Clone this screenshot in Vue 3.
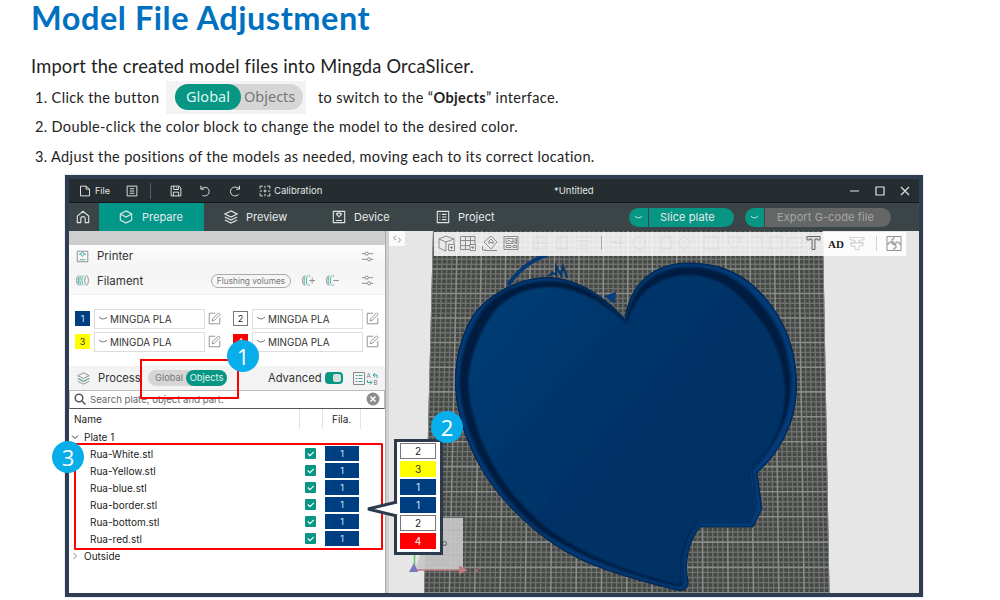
<script setup>
const icons = {
  file: 'M2 1.500h7.500l4.500 4v9H2zM9.500 1.500v4H14',
  list: 'M1.500 1.500h13v13h-13zM5 5h6M5 8h6M5 11h6',
  save: 'M1.500 1.500h10.500l2.500 2.500v10.500h-13zM5 1.500v4.500h6.500V1.500M4.500 14.500V9.500h7v5M9 3v1.500',
  undo: 'M2.500 1v4.500h4.500M3 5.500C6 1.500 13.500 2.500 13.500 8.500c0 5.500-5.500 7-9 5.500',
  redo: 'M14 1v4.500H9.500M13.500 5C10 1 2 2.500 2 8.500s6.500 8 11 4',
  calib: 'M5 1.500H1.500V5M8 1v3M11 1.500h3.500V5M1.500 11v3.500H5M14.500 11v3.500H11M1 8h3M12 8h3M8 12v3M6 8h4M8 6v4',
  home: 'M1.500 7 8 1.500 14.500 7v7.500H10.500V10a2.500 2.500 0 0 0-5 0v4.500h-4z',
  cube: 'M8 1 14.500 4.500v7L8 15l-6.500-3.500v-7zM1.500 4.500 8 8l6.500-3.500',
  layers: 'M8 1 15 4.500 8 8 1 4.500zM1 8l7 3.500L15 8M1 11.500 8 15l7-3.500',
  device: 'M1.500 1.500h13v13h-13zM4.500 12h7M4.500 4.500h1.500M10 4.500h1.500M8 8.500V7M6.500 3.500h3l.8 2L8 7.500 5.700 5.500z',
  project: 'M1.500 1.500h13v13h-13zM4 5h1M7 5h5M4 8h1M7 8h5M4 11h1M7 11h5',
  sliders: 'M1 4.500h4M9 4.500h6M1 11.500h7M12 11.500h3M5 4.500a2 2 0 1 0 4 0 2 2 0 1 0-4 0M8 11.500a2 2 0 1 0 4 0 2 2 0 1 0-4 0',
  edit: 'M9 1.500H1.500v13h13V7M5 11l1-3 7-7 2 2-7 7z',
}
const tabs = [
  { name: 'Prepare', icon: 'cube', cls: 't-prepare' },
  { name: 'Preview', icon: 'layers', cls: 't-preview' },
  { name: 'Device', icon: 'device', cls: 't-device' },
  { name: 'Project', icon: 'project', cls: 't-project' },
]
const filaments = [
  { n: 1, c: 'navy' }, { n: 2, c: 'white' }, { n: 3, c: 'yellow' }, { n: 4, c: 'red' },
]
const parts = ['White', 'Yellow', 'blue', 'border', 'bottom', 'red']
const choices = [
  { n: 2, c: 'white' }, { n: 3, c: 'yellow' }, { n: 1, c: 'navy' },
  { n: 1, c: 'navy' }, { n: 2, c: 'white' }, { n: 4, c: 'red' },
]
const rowY = (k) => 244.7 + 24.3 * k + 0.04 * k * k
let minor = ''
let major = ''
for (let i = 0; i <= 80; i++) {
  const line = `M${433 + (390 * i) / 80} 231L${424 + (405.5 * i) / 80} 593`
  if (i % 5) minor += line
  else major += line
}
for (let j = -2; j <= 72; j++) {
  const y = rowY(j / 5).toFixed(1)
  if (j % 5) minor += `M420 ${y}H832`
  else major += `M420 ${y}H832`
}
const heart = 'M625 319C607 299 580 279 550 277.500C522 277 496 290 477 310C462 330 455 358 455.500 383C456 408 463 436 481 468C503 506 540 538 572 555C590 565 620 576 676 590C684 592 689 588 688 581C685 566 686 545 700 527H753L762 509L757 473C782 450 797 420 796.500 384C796 348 784 317 760 292C740 271 716 263 688 263C655 263 630 282 625 319Z'
const wall = 'M626 321C630 294 650 267 688 267C714 267 736 276 755 297C780 324 790 352 791 384C791 416 777 444 752 469L756 507L749 522H699C686 538 680 560 683 583C681 588 675 586 668 584C616 571 570 553 536 527C492 490 462 434 459.500 383C460 358 466 335 481 313C495 291 525 281 550 281C580 281 603 298 626 321Z'
const floor = 'M627 324C633 302 649 276 688 275C712 275 732 286 747 304C772 330 782 354 785 386C787 418 775 445 751 469L755 506L748 521H698C684 536 679 560 681 581C679 586 675 584 668 582C618 569 572 549 541 523C500 488 471 434 468 383C469 358 480 330 496 309C512 293 530 287 552 287C582 289 605 304 627 324Z'
</script>

<template>
  <div class="page">
    <h1><span>Model File Adjustment</span></h1>
    <p class="lead">Import the created model files into Mingda OrcaSlicer.</p>
    <div class="step s1">
      <span class="s1a">1. Click the button</span>
      <span class="switchpic"><span class="bigswitch"><b>Global</b><i>Objects</i></span></span>
      <span class="s1b">to switch to the “<strong>Objects</strong>” interface.</span>
    </div>
    <div class="step s2">2. Double-click the color block to change the model to the desired color.</div>
    <div class="step s3">3. Adjust the positions of the models as needed, moving each to its correct location.</div>

    <div class="window">
      <div class="titlebar">
        <svg class="ic m-file" viewBox="0 0 16 16"><path :d="icons.file" /></svg>
        <span class="w-file">File</span>
        <svg class="ic" viewBox="0 0 16 16"><path :d="icons.list" /></svg>
        <span class="bar"></span>
        <svg class="ic m-save" viewBox="0 0 16 16"><path :d="icons.save" /></svg>
        <svg class="ic m-undo" viewBox="0 0 16 16"><path :d="icons.undo" /></svg>
        <svg class="ic m-redo" viewBox="0 0 16 16"><path :d="icons.redo" /></svg>
        <svg class="ic m-calib" viewBox="0 0 16 16"><path :d="icons.calib" /></svg>
        <span class="w-calib">Calibration</span>
        <span class="w-title">*Untitled</span>
        <svg class="winbtns" viewBox="0 0 62 12"><path d="M0 6h9M26 2h8v8h-8zM51 2l8 8M59 2l-8 8" /></svg>
      </div>

      <div class="tabbar">
        <div class="home"><svg class="ic big" viewBox="0 0 16 16"><path :d="icons.home" /></svg></div>
        <div v-for="t in tabs" :key="t.name" class="tab" :class="t.cls">
          <svg class="ic big" viewBox="0 0 16 16"><path :d="icons[t.icon]" /></svg>
          <span>{{ t.name }}</span>
        </div>
        <div class="actions">
          <span class="drop"><svg viewBox="0 0 10 5"><path d="M1 1q4 4 8 0" /></svg></span>
          <span class="act slice">Slice plate</span>
          <span class="drop d2"><svg viewBox="0 0 10 5"><path d="M1 1q4 4 8 0" /></svg></span>
          <span class="act export">Export G-code file</span>
        </div>
      </div>

      <div class="body">
        <div class="side">
          <div class="strip"></div>
          <div class="sec printer">
            <svg class="sic" viewBox="0 0 16 16"><path d="M1.500 1.500h13v13h-13z" /><path class="g" d="M4.500 12h7M3.500 5h3M9.500 5h3M6.500 3.500h3l.8 2L8 8 5.700 5.500z" /></svg>
            <span class="name">Printer</span>
            <svg class="sic sl" viewBox="0 0 16 16"><path :d="icons.sliders" /></svg>
          </div>
          <div class="sec fil">
            <svg class="sic" viewBox="0 0 16 16"><path d="M3 2C0 4 0 12 3 14M13 2c3 2 3 10 0 12M13 2c-3 2-3 10 0 12" /><path class="g" d="M5 2C2 4 2 12 5 14M7 2c-3 2-3 10 0 12M9.500 2c-3 2-3 10 0 12" /></svg>
            <span class="name">Filament</span>
            <span class="flush">Flushing volumes</span>
            <svg class="sic plus" viewBox="0 0 16 16"><path d="M3 2C0 4 0 12 3 14M8 1.500l2 1.500M8 14.500l2-1.500M9 8h7M12.500 4.500v7" /><path class="g" d="M4.500 2C2 4 2 12 4.500 14M7.500 2c-3 2-3 10 0 12" /></svg>
            <svg class="sic minus" viewBox="0 0 16 16"><path d="M3 2C0 4 0 12 3 14M8 1.500l2 1.500M8 14.500l2-1.500M9 8h7" /><path class="g" d="M4.500 2C2 4 2 12 4.500 14M7.500 2c-3 2-3 10 0 12" /></svg>
            <svg class="sic sl" viewBox="0 0 16 16"><path :d="icons.sliders" /></svg>
          </div>
          <div class="fils">
            <div v-for="f in filaments" :key="f.n" class="filrow">
              <span class="sw" :class="f.c">{{ f.n }}</span>
              <span class="combo"><svg viewBox="0 0 10 5"><path d="M1 1q4 4 8 0" /></svg>MINGDA PLA</span>
              <svg class="sic ed" viewBox="0 0 16 16"><path :d="icons.edit" /></svg>
            </div>
          </div>
          <div class="sec process">
            <svg class="sic" viewBox="0 0 16 16"><path :d="icons.layers" /><path class="g" d="M1 8l7 3.500L15 8" /></svg>
            <span class="name">Process</span>
            <span class="toggle"><i>Global</i><b>Objects</b></span>
            <span class="adv">Advanced</span>
            <span class="knob"><i></i></span>
            <svg class="cmp" viewBox="0 0 26 15"><path d="M.5 1.500h11v12H.500zM2.500 4.500h2M2.500 7.500h2M2.500 10.500h2" /><path class="g" d="M5.500 4.500h4M5.500 7.500h4M5.500 10.500h4M20 4h4v3M22 2l-2 2 2 2M14.500 9v2.500h4M17 9.500l2 2-2 2" /><text x="13.500" y="6.500">A</text><text x="20.500" y="14">B</text></svg>
          </div>
          <div class="search">
            <svg class="mag" viewBox="0 0 12 12"><circle cx="5" cy="5" r="3.800" /><path d="M8 8l3.500 3.500" /></svg>
            <span>Search plate, object and part.</span>
            <svg class="clr" viewBox="0 0 14 14"><circle cx="7" cy="7" r="6.500" /><path d="M4.500 4.500l5 5M9.500 4.500l-5 5" /></svg>
          </div>
          <div class="tree">
            <div class="thead"><span class="c1">Name</span><span class="c2"></span><span class="c3">Fila.</span><span class="c4"></span></div>
            <div class="node"><svg viewBox="0 0 8 8"><path d="M1 2.500l3 3 3-3" /></svg>Plate 1</div>
            <div v-for="p in parts" :key="p" class="part">
              <span class="pn">Rua-{{ p }}.stl</span>
              <svg class="chk" viewBox="0 0 10 10"><rect width="10" height="10" rx="1" /><path d="M2.500 5l2 2 3.500-3.500" /></svg>
              <span class="cell">1</span>
            </div>
            <div class="node out"><svg viewBox="0 0 8 8"><path d="M2.500 1l3 3-3 3" /></svg>Outside</div>
          </div>
        </div>

        <svg class="view" viewBox="386 231 533 362">
          <defs>
            <clipPath id="plate"><path d="M433 231H823L829.500 593H424Z" /></clipPath>
            <clipPath id="inside"><path :d="heart" /></clipPath>
            <linearGradient id="face" x1="0" y1="0" x2=".6" y2=".5"><stop offset="0" stop-color="#073d76" /><stop offset="1" stop-color="#003266" /></linearGradient>
            <filter id="soft"><feGaussianBlur stdDeviation="0.800" /></filter>
          </defs>
          <rect x="386" y="231" width="533" height="362" fill="#e6e6e6" />
          <rect x="386" y="231" width="3" height="362" fill="#cfcfcf" />
          <g clip-path="url(#plate)">
            <rect x="420" y="231" width="415" height="362" fill="#454845" />
            <path :d="minor" stroke="#6f726f" stroke-width="1.400" />
            <path :d="major" stroke="#8a8d8a" stroke-width="1.600" />
          </g>
          <path d="M432 518h31v52h-48z" fill="#c8c8c8" opacity=".92" />
          <path d="M432 530h31M432 555h31" stroke="#b5b5b5" />
          <path d="M414.500 569v-16" stroke="#62c662" stroke-width="1.500" />
          <path d="M414 570h48" stroke="#b97b7f" stroke-width="1.500" />
          <path d="M459 565.500l9 4.500-9 4.500z" fill="#b97b7f" />
          <path d="M409 572l5-9 4 9z" fill="#7777bd" />
          <path d="M475 568l4 5M479 568l-4 5" stroke="#ad7478" />
          <circle cx="444.500" cy="543.500" r="2" fill="none" stroke="#555" />
          <path d="M508 285C516 273 530 260 547 255" fill="none" stroke="#053a75" stroke-width="4" />
          <path d="M548 276l5-3 3 2 0-9 5 9 2-9 4 12" fill="none" stroke="#04376f" stroke-width="2" />
          <path d="M604 296l12-4-1 12z" fill="#063f7e" />
          <path :d="heart" fill="#023b77" stroke="#02264e" stroke-width="1" />
          <g clip-path="url(#inside)">
            <path :d="wall" fill="#001e40" filter="url(#soft)" />
            <path :d="floor" fill="url(#face)" filter="url(#soft)" />
            <path d="M751 470L755 507L748 521H699C686 537 680 560 682 582" fill="none" stroke="#0c447f" stroke-width="1" opacity=".7" />
            <path :d="heart" fill="none" stroke="#022c59" stroke-width="2" />
          </g>
          <rect x="389" y="231" width="16" height="15" fill="#fafafa" />
          <path d="M396 235.500l-2.500 2.500 2.500 2M398.500 237.500l2 2.500-2 2.500" class="tool" />
          <rect x="434" y="232" width="472" height="24" fill="#fff" opacity=".86" />
          <g class="tool">
            <path d="M439 239l7-3 8 3v5M439 239v9l7 3v-9l8-3M439 239l7 3M448.500 244.500h6v6h-6zM450 247.500h3M451.500 246v3" />
            <path d="M461 236.500h14v8M460.500 236.500v13h9M461 240.500h14M461 245.500h9M465.500 236v14M470.500 236v9M470 244.500h5.500v6H470zM471 247.500h3M472.800 246v3" />
            <path d="M484 242l7-6 6 6-6 7zM489 244v-3l2-2 2 2v3M489 242.500h4M485 250.500h12M482.500 246v4h4" />
            <path d="M504 236.500h14v13h-14zM506 238.500h7v5h-7zM515 238.500h1.500v5H515zM506 245.500h5v2h-5zM513 245.500h3.500v2H513zM507 242l2-2 2 2 2-1" />
          </g>
          <g class="ghost"><path d="M534 237h12v12h-12zM538 237v12M534 243h12M556 237h11v12h-11zM560 237v12M577 237h12M577 241h12M577 245h12M577 249h12M614 243h12M620 237v12M614 243l3-3M641 237a6 6 0 1 0 2 1M661 237h10v12h-10zM684 236l7 7-7 7-7-7zM704 237h14v12h-14zM728 237h12v6l-6 6-6-6zM750 237h12v12M770 237h12v12h-12zM788 238h14v10h-14z" /></g>
          <path d="M601.500 236v14" class="tool" opacity=".7" />
          <path d="M807 236.500h13v3.500h-2.500v-1h-2.500v10.500h-3V239h-2.500v1H807z" class="tool tee" />
          <text x="828" y="248" class="ad">AD</text>
          <path d="M850 237.500h14v2.500h-4v3h3v3h-4v3.500h-4V246h-4v-3h3v-3h-4zM850 243h14M855 240v3M859 240v3" class="tool pale" />
          <path d="M876.500 236v15" class="tool pale" />
          <path d="M887 236.500h14v14h-14zM894 236v3h-2v3h2v3h2v3h-2v2M887 244h2v-2h3v2h4v-2h3v2h2" class="tool" />
        </svg>
      </div>

      <div class="box box1"></div>
      <div class="box box3"></div>
      <div class="menu">
        <svg class="tail" viewBox="0 0 36 20"><path d="M34 3L5 10l29 7" /></svg>
        <span v-for="(c, i) in choices" :key="i" :class="c.c">{{ c.n }}</span>
      </div>
      <div class="badge b1">1</div>
      <div class="badge b2">2</div>
      <div class="badge b3">3</div>
    </div>
  </div>
</template>

<style>
html, body { background: #fff; overflow: hidden; }
</style>
<style scoped>
* { box-sizing: border-box; }
.page { width: 1000px; height: 600px; overflow: hidden; background: #fff; color: #222; font-family: Lato, "Open Sans", sans-serif; }
h1 { margin: 0; height: 46px; padding-left: 31px; font-size: 32.500px; line-height: 36px; letter-spacing: .54px; font-weight: 700; color: #0070c0; white-space: nowrap; }
.lead { margin: 0; height: 36px; padding-left: 31px; font-size: 18.300px; line-height: 40px; letter-spacing: .2px; white-space: nowrap; }
.step { display: flex; align-items: center; height: 30px; padding-left: 35px; font-size: 14.500px; letter-spacing: .35px; white-space: nowrap; }
.s2, .s3 { padding-bottom: 2px; }
.s1a { width: 131px; }
.s1b { margin-left: 12px; }
.switchpic { width: 140px; height: 33px; background: #f3f3f3; display: flex; align-items: center; padding-left: 9px; flex: none; letter-spacing: 0; }
.bigswitch { display: flex; width: 128px; height: 26px; border-radius: 13px; background: #d6d6d6; font-family: "Noto Sans", sans-serif; font-size: 14.500px; line-height: 25px; }
.bigswitch b { width: 66px; border-radius: 13px; background: #079684; color: #dff6f2; text-align: center; font-weight: 400; }
.bigswitch i { font-style: normal; color: #777; padding-left: 3px; }

.window { position: relative; margin: 3px 0 0 65px; width: 858px; height: 422px; border: 4px solid #2e3d51; display: flex; flex-direction: column; font-family: Inter, Roboto, sans-serif; box-shadow: 0 0 1px #8d99ad; }
svg { display: block; fill: none; flex: none; }
.ic { width: 12px; height: 12px; stroke: #dfe3e3; stroke-width: 1.300; }
.big { width: 14px; height: 14px; }
.titlebar { height: 24px; flex: none; background: #262d30; border-bottom: 1px solid #14191b; display: flex; align-items: center; color: #e2e5e5; font-size: 9.500px; white-space: nowrap; }
.m-file { margin-left: 10px; margin-right: 4px; }
.w-file { width: 31px; font-size: 9px; }
.bar { width: 1px; height: 16px; margin-left: 12px; background: #596063; }
.m-save { margin-left: 19px; }
.m-undo { margin-left: 17px; }
.m-redo { margin-left: 18px; }
.m-calib { margin-left: 18px; }
.w-calib { margin-left: 3px; width: 280px; }
.w-title { width: 296px; }
.winbtns { width: 62px; height: 12px; stroke: #dfe3e3; stroke-width: 1.200; }
.tabbar { height: 28px; flex: none; background: #3b4446; display: flex; color: #e8ebeb; font-size: 11px; }
.home { width: 30px; display: flex; align-items: center; padding-left: 7px; }
.tab { display: flex; align-items: center; gap: 8px; }
.t-prepare { width: 105px; padding-left: 20px; background: #009788; gap: 9px; }
.t-preview { width: 108px; padding-left: 20px; }
.t-device { width: 105px; padding-left: 20px; }
.t-project { width: 212px; padding-left: 19px; }
.actions { display: flex; align-items: center; }
.drop { width: 19px; height: 19px; border-radius: 10px 0 0 10px; background: #079684; display: flex; align-items: center; justify-content: center; margin-right: 1px; }
.drop svg { width: 9px; height: 5px; stroke: #d5eeea; }
.d2 { margin-left: 11px; }
.act { height: 19px; line-height: 18px; border-radius: 0 10px 10px 0; padding-left: 11px; font-size: 11px; white-space: nowrap; }
.slice { width: 85px; background: #079684; letter-spacing: .1px; }
.export { width: 126px; background: #656767; color: #a4a6a6; padding-left: 12px; letter-spacing: .1px; }
.body { flex: 1; display: flex; min-height: 0; }
.side { width: 317px; background: #fff; display: flex; flex-direction: column; color: #333; font-size: 11.500px; border-right: 1px solid #aaa; }
.strip { height: 14px; background: #cecece; flex: none; }
.sec { display: flex; align-items: center; background: #f5f5f5; flex: none; padding-left: 7px; }
.printer { height: 22px; background: linear-gradient(#fcfcfc, #f5f5f5); }
.fil { height: 28px; background: linear-gradient(#f3f3f3, #fafafa); border-bottom: 1px solid #efefef; }
.sic { width: 13px; height: 13px; stroke: #858585; stroke-width: 1.100; }
.g { stroke: #36a99d; }
.name { margin-left: 8px; }
.printer .name { width: 264px; }
.fil .name { width: 114px; }
.flush { width: 80px; height: 14px; border: 1px solid #aaa; border-radius: 7px; font-size: 8.300px; line-height: 12px; text-align: center; color: #777; white-space: nowrap; }
.plus { margin-left: 11px; }
.minus { margin-left: 11px; }
.fil .sl { margin-left: 22px; }
.fils { height: 71px; flex: none; display: grid; grid-template-columns: 158px 158px; grid-template-rows: 23px 23px; padding: 12px 0 0 6px; }
.filrow { display: flex; align-items: center; }
.sw { width: 15px; height: 15px; font-size: 9px; line-height: 15px; text-align: center; color: #222; }
.navy { background: #003e82; color: #dbe6f5; }
.yellow { background: #ff0; color: #333; }
.red { background: #f00; color: #fff; }
.white { background: #fff; box-shadow: inset 0 0 0 1px #777; }
.combo { margin-left: 4px; width: 111px; height: 20px; border: 1px solid #ddd; display: flex; align-items: center; gap: 2px; padding-left: 3px; font-size: 9.900px; color: #333; white-space: nowrap; }
.combo svg { width: 10px; height: 5px; stroke: #777; }
.ed { margin-left: 3px; stroke: #888; }
.process { height: 24px; background: #f3f3f3; padding-left: 8px; }
.process .name { width: 50px; font-size: 11.200px; }
.toggle { display: flex; width: 79px; height: 16px; border-radius: 8px; background: #d6d6d6; font-size: 9.300px; line-height: 16px; }
.toggle i { font-style: normal; color: #777; width: 38px; padding-left: 7px; }
.toggle b { width: 41px; font-weight: 400; color: #e2f6f3; background: #079684; border-radius: 8px; text-align: center; }
.adv { margin-left: 41px; width: 57px; font-size: 11.200px; }
.knob { width: 18px; height: 12px; border-radius: 4px; background: #079684; padding: 2px; display: flex; justify-content: flex-end; }
.knob i { width: 8px; height: 8px; border-radius: 2px; background: #d5dedc; }
.cmp { width: 26px; height: 15px; margin-left: 10px; stroke: #888; overflow: visible; }
.cmp text { font-size: 6px; fill: #777; stroke: none; }
.search { height: 19px; flex: none; border: 1px solid #bbb; border-bottom-color: #555; display: flex; align-items: center; padding: 0 0 1px 4px; color: #666; font-size: 9.600px; }
.search span { width: 276px; margin-left: 4px; }
.mag { width: 12px; height: 12px; stroke: #555; stroke-width: 1.500; }
.clr { width: 14px; height: 14px; margin-left: 0; stroke: #fff; stroke-width: 1.500; }
.clr circle { fill: #8d8d8d; stroke: none; }
.tree { font-size: 10px; color: #222; }
.thead { display: flex; height: 20px; line-height: 20px; }
.c1 { width: 231px; padding-left: 5px; border-right: 1px solid #e3e3e3; }
.c2 { width: 23px; border-right: 1px solid #e3e3e3; }
.c3 { width: 38px; padding-left: 9px; border-right: 1px solid #e3e3e3; }
.node { display: flex; align-items: center; height: 16px; gap: 5px; padding-left: 2px; }
.node svg { width: 8px; height: 8px; stroke: #333; }
.part { display: flex; align-items: center; height: 17px; padding-left: 21px; }
.pn { width: 215px; }
.chk { width: 11px; height: 11px; stroke: #fff; }
.chk rect { fill: #079684; stroke: none; }
.cell { margin-left: 9px; width: 34px; height: 15px; line-height: 15px; text-align: center; background: #003e82; color: #dce6f4; font-size: 9px; }
.out { height: 18px; }
.out svg { stroke: #888; }
.view { width: 533px; height: 100%; }
.tool { stroke: #777; stroke-width: .8; fill: none; }
.tee { stroke-width: 1; stroke: #666; fill: #ddd; }
.pale { stroke: #c7c7c7; }
.ghost { stroke: #bbb; opacity: .3; fill: none; }
.ad { font: 700 11px "Liberation Serif", serif; fill: #222; }
.box { position: absolute; border: 2px solid #f00; }
.box1 { left: 71px; top: 180px; width: 99px; height: 40px; }
.box3 { left: 5px; top: 264px; width: 309px; height: 107px; border-radius: 1px; }
.menu { position: absolute; left: 325px; top: 260px; width: 49px; height: 116px; background: #fff; border: 3px solid #2d3a4d; display: flex; flex-direction: column; gap: 2px; padding: 1px 3px; }
.menu span { width: 36px; height: 16px; flex: none; line-height: 16px; text-align: center; font-size: 10px; }
.tail { position: absolute; left: -34px; top: 57px; width: 36px; height: 20px; }
.tail path { stroke: #2d3a4d; stroke-width: 3; fill: #fff; }
.badge { position: absolute; width: 32px; height: 32px; border-radius: 50%; background: #08aeea; color: #fff; font: 22px/32px "Open Sans", sans-serif; text-align: center; }
.b1 { left: 158px; top: 161px; }
.b2 { left: 362px; top: 232px; }
.b3 { left: -17px; top: 262px; }
</style>
